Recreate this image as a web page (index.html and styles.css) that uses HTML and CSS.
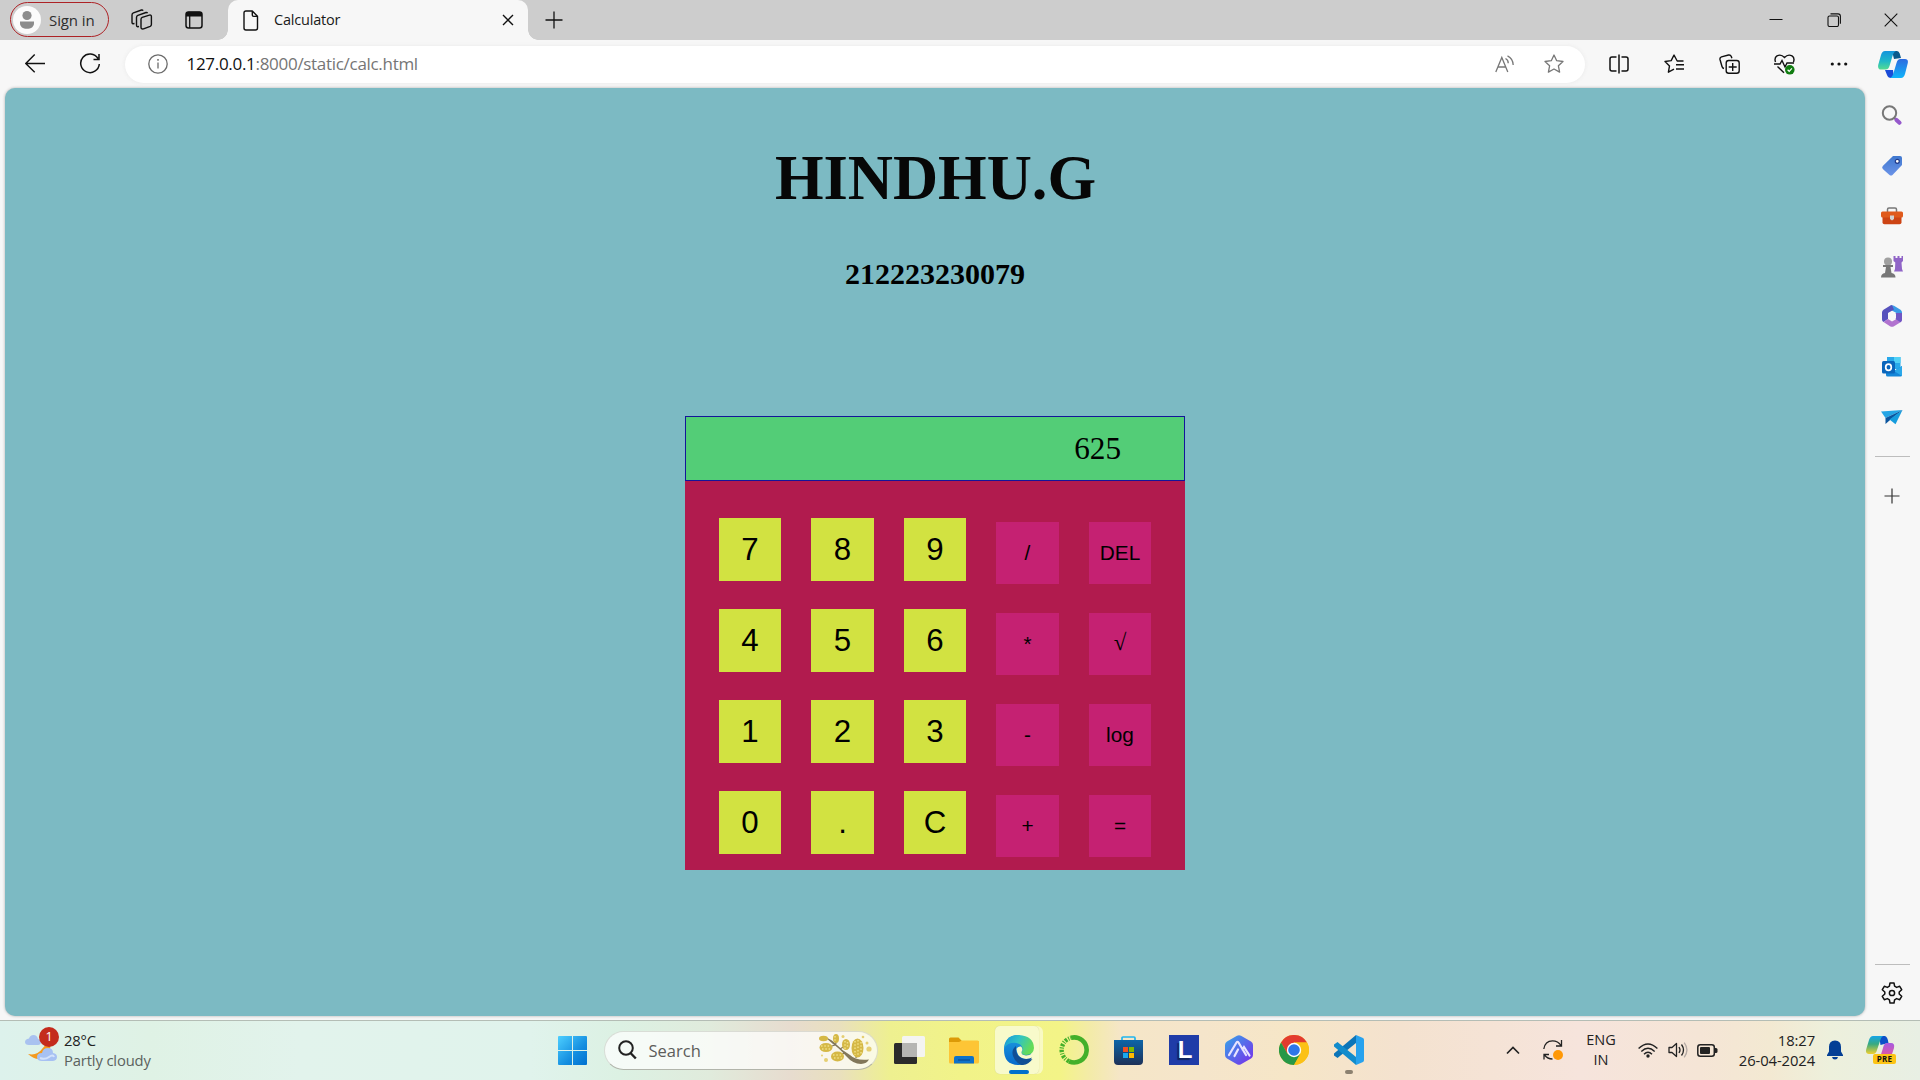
FILE: index.html
```html
<!DOCTYPE html>
<html lang="en">
<head>
<meta charset="utf-8">
<title>Calculator</title>
<link rel="stylesheet" href="styles.css">
</head>
<body>
<div class="desktop">
  <header class="tabstrip">
    <div class="signin">
      <svg width="28" height="28" viewBox="0 0 28 28"><circle cx="14" cy="14" r="14" fill="#fbfbfb"/><circle cx="14" cy="9.5" r="4.6" fill="#8c8c8c"/><path d="M7 15.500h14v1.500c0 4-3 5.800-7 5.800s-7-1.800-7-5.800z" fill="#8c8c8c"/></svg>
      <span class="ui signin-label">Sign in</span>
    </div>
    <svg class="workspaces" width="22" height="22" viewBox="0 0 22 22" fill="none" stroke="#111" stroke-width="1.400" stroke-linejoin="round"><path d="M10 10.200q0-1.300 1.200-1.800l7.200-2.300q2-.4 2 1.400v8q0 1.300-1.200 1.800l-6.700 2.600q-2.500.5-2.500-1.700z"/><path d="M8 17.500l-1.500.2q-1 0-1-1.400V8.500q0-1.600 1.400-2.200L15 3.500q1.200-.2 1.500.8"/><path d="M3.500 14.500l-1.500.2q-1 0-1-1.400V6q0-1.600 1.400-2.200L10.500 1q1.200-.2 1.500.8"/></svg>
    <svg class="tabactions" width="18" height="18" viewBox="0 0 18 18"><rect x="1" y="1" width="16" height="16" rx="2.500" fill="none" stroke="#111" stroke-width="1.500"/><path d="M1 3q0-2.300 2.300-2.300h11.400q2.300 0 2.300 2.300v2.500H1z" fill="#111"/><path d="M4.700 5v12" stroke="#111" stroke-width="1.300"/></svg>
    <div class="tab">
      <svg width="16" height="21" viewBox="0 0 16 21" fill="none" stroke="#111" stroke-width="1.400" stroke-linejoin="round"><path d="M9.300 1H3Q1 1 1 3v15q0 2 2 2h9.500q2 0 2-2V6.300zV5q0 1.400 1.400 1.400h3.800"/></svg>
      <span class="ui tab-title">Calculator</span>
      <svg width="12" height="12" viewBox="0 0 12 12" stroke="#111" stroke-width="1.400"><path d="M1 1l10 10M11 1L1 11"/></svg>
    </div>
    <svg class="newtab" width="18" height="18" viewBox="0 0 18 18" stroke="#111" stroke-width="1.300"><path d="M9 .5v17M.5 9h17"/></svg>
    <div class="winctl">
      <svg width="14" height="14" viewBox="0 0 14 14" stroke="#111"><path d="M.5 6.500h13"/></svg>
      <svg width="14" height="14" viewBox="0 0 14 14" fill="none" stroke="#111" stroke-width="1.100"><rect x="1" y="3" width="10.500" height="10.500" rx="1.500"/><path d="M3.500.9H11q2.400 0 2.400 2.400v7.500"/></svg>
      <svg width="14" height="14" viewBox="0 0 14 14" stroke="#111" stroke-width="1.100"><path d="M.7.7l12.600 12.600M13.300.7L.7 13.300"/></svg>
    </div>
  </header>

  <nav class="toolbar">
    <div class="navbtn"><svg width="20" height="20" viewBox="0 0 20 20" fill="none" stroke="#111" stroke-width="1.400"><path d="M20 9.500H.8M9.700.5L.8 9.500l8.900 8.800"/></svg></div>
    <div class="navbtn"><svg width="22" height="22" viewBox="0 0 22 22" fill="none" stroke="#111" stroke-width="1.500"><path d="M19 5.500A9.300 9.300 0 1 0 20.300 11M20 1v5.500h-5.500"/></svg></div>
    <div class="address">
      <svg width="20" height="20" viewBox="0 0 20 20" fill="none" stroke="#6b6b6b" stroke-width="1.300"><circle cx="10" cy="10" r="9.200"/><path d="M10 8.500v6"/><path d="M10 5v1.700" stroke-width="1.500"/></svg>
      <span class="ui url"><b class="host">127.0.0.1</b>:8000/static/calc.html</span>
      <div class="addr-btn"><svg width="20" height="18" viewBox="0 0 20 18" fill="none" stroke="#777" stroke-width="1.300"><path d="M.8 17L6.800 2.500 12.800 17M3 12h7.600M10.500 3.500q3 1.500 2.700 4.800M12.500.8q5.500 2.700 5.700 9.200"/></svg></div>
      <div class="addr-btn"><svg width="20" height="20" viewBox="0 0 20 20" fill="none" stroke="#777" stroke-width="1.300" stroke-linejoin="round"><path d="M10 1l2.700 5.700 6.300.8-4.600 4.300 1.200 6.300L10 15l-5.600 3.100 1.200-6.300L1 7.500l6.300-.8z"/></svg></div>
    </div>
    <div class="tools">
      <div class="tool"><svg width="20" height="20" viewBox="0 0 20 20" fill="none" stroke="#111" stroke-width="1.500"><path d="M7.500 3H3Q1 3 1 5v10q0 2 2 2h4.500M12.500 3H17q2 0 2 2v10q0 2-2 2h-4.500M10 .5v19"/></svg></div>
      <div class="tool"><svg width="20" height="20" viewBox="0 0 20 20" fill="none" stroke="#111" stroke-width="1.400" stroke-linejoin="round"><path d="M19.500 7h-6.300L10 1 7.200 6.600 1 7.500l4.500 4.400-1.100 6.300 5.600-3M12 10.800h8M12 15h8"/></svg></div>
      <div class="tool"><svg width="21" height="20" viewBox="0 0 21 20" fill="none" stroke="#111" stroke-width="1.400"><rect x="7.200" y="6.500" width="13" height="12.800" rx="2.500"/><path d="M13.700 9v8M9.700 13h8M5 14.500q-1.500-.3-2-2L1 5.500Q.6 3.500 2.500 2.800L9.500 1Q11.500.6 12.300 2.500l.6 1.700"/></svg></div>
      <div class="tool"><svg width="21" height="21" viewBox="0 0 21 21" fill="none" stroke="#111" stroke-width="1.400"><path d="M1.500 8Q0 4 3 1.900 7-.3 10.500 3.500 14-.3 18 1.900 21 4 19.500 8M0 10h6l2-3.500 3 6.500 2-4h7M3.500 12.500l6.500 6.300"/><circle cx="15.800" cy="15.800" r="4.800" fill="#107c10" stroke="none"/><path d="M13.600 15.800l1.600 1.500 2.700-2.900" stroke="#fff" stroke-width="1.200"/></svg></div>
      <div class="tool"><svg width="18" height="4" viewBox="0 0 18 4" fill="#111"><circle cx="2.300" cy="2" r="1.600"/><circle cx="9" cy="2" r="1.600"/><circle cx="15.700" cy="2" r="1.600"/></svg></div>
      <div class="tool"><svg width="30" height="27" viewBox="0 0 30 27"><defs><linearGradient id="ca" x1="0" y1="0" x2="0" y2="1"><stop offset="0" stop-color="#1494dc"/><stop offset=".55" stop-color="#20b8c8"/><stop offset="1" stop-color="#55dc90"/></linearGradient><linearGradient id="cb" x1="0" y1="0" x2="0" y2="1"><stop offset="0" stop-color="#2d6be0"/><stop offset="1" stop-color="#10b4fa"/></linearGradient></defs><path d="M14 0h5q2 0 2.700 2.500L23 7l-7 1z" fill="#0a5a8c"/><path d="M7 19h8l1 8h-3q-3 0-4-3z" fill="#1a4bd8"/><path d="M7 0h11q-2.500 1-3.500 5l-3 10q-1 3.500-4 3.500H3Q-.5 18.500.2 14L3 4Q4.200 0 7 0z" fill="url(#ca)"/><path d="M23 27H12q2.500-1 3.500-5l3-10q1-4 4-4H27q3.500 0 2.800 4L27 23q-1.200 4-4 4z" fill="url(#cb)"/></svg></div>
    </div>
  </nav>

  <div class="body-row">
    <main class="page">
      <h1 class="name">HINDHU.G</h1>
      <h2 class="regno">212223230079</h2>
      <div class="calc">
        <div class="display">625</div>
        <div class="keys">
          <button class="key num">7</button><button class="key num">8</button><button class="key num">9</button><button class="key op">/</button><button class="key op">DEL</button>
          <button class="key num">4</button><button class="key num">5</button><button class="key num">6</button><button class="key op">*</button><button class="key op root">√</button>
          <button class="key num">1</button><button class="key num">2</button><button class="key num">3</button><button class="key op">-</button><button class="key op">log</button>
          <button class="key num">0</button><button class="key num">.</button><button class="key num">C</button><button class="key op">+</button><button class="key op">=</button>
        </div>
      </div>
    </main>
    <aside class="sidebar">
      <div class="side"><svg width="22" height="22" viewBox="0 0 22 22" fill="none"><circle cx="8.500" cy="8" r="6.700" stroke="#777" stroke-width="2"/><path d="M13 12.500l2 2" stroke="#777" stroke-width="2"/><path d="M15.500 15l3 2.700" stroke="#9659cc" stroke-width="4.200" stroke-linecap="round"/></svg></div>
      <div class="side"><svg width="22" height="22" viewBox="0 0 22 22"><defs><linearGradient id="tg" x1="0" y1="0" x2="0" y2="1"><stop offset="0" stop-color="#3f78cf"/><stop offset="1" stop-color="#6b93e8"/></linearGradient></defs><path d="M12 1h7q2 0 2 2v7L11.500 20q-1.500 1.200-3 0L1.800 14q-1.300-1.500 0-3z" fill="url(#tg)"/><circle cx="16.300" cy="6.300" r="2" fill="#fff" stroke="#213b8a" stroke-width="1.200"/></svg></div>
      <div class="side"><svg width="22" height="18" viewBox="0 0 22 18"><path d="M6.500 5V2.500Q6.500 1 8 1h6q1.500 0 1.500 1.500V5" fill="none" stroke="#777" stroke-width="1.500"/><path d="M1.500 8h19v7.500q0 1.800-2 1.800h-15q-2 0-2-1.800z" fill="#cd4414"/><rect y="4.500" width="22" height="6" rx="1.500" fill="#e05a1c"/><path d="M9 8.500h4V12l-2 1.500L9 12z" fill="#d2d2d2"/></svg></div>
      <div class="side"><svg width="22" height="23" viewBox="0 0 22 23"><path d="M12.500 1h2v2h2V1h2v2h2V1H22v5l-1.500 1.500L21 14l1 2.500h-9L14 14l.3-6.500L12.500 6z" fill="#9065c7"/><circle cx="7" cy="6.500" r="4" fill="#a0a0a0"/><path d="M2 10h10v2H9.500l1 6q4 .5 4 4.500H0q0-4 4-4.500l1-6H2z" fill="#777"/></svg></div>
      <div class="side"><svg width="20" height="22" viewBox="0 0 20 22"><path d="M8 .8q2-1.200 4 0l6.500 4Q20 5.800 20 7.500V14l-5.500-2.500V8L8 4.500z" fill="#3a9be6"/><path d="M8 .8L1.500 4.800Q0 5.800 0 7.500v7Q0 16 1.500 17L6 14V8l6-3.500-2-4.500z" fill="#5651bd"/><path d="M1.500 17L8 21.200q2 1.200 4 0l6.500-4Q20 16.200 20 14.500V12l-5.500-1v3L10 16.500 6 14z" fill="#b173cf"/><path d="M20 8v7q-.3 1.300-1.500 2.200L13.500 14V8z" fill="#6f56c4"/><path d="M10 6.500l4 2.300v4.500l-4 2.300-4-2.300V8.800z" fill="#f7f7f7"/></svg></div>
      <div class="side"><svg width="20" height="20" viewBox="0 0 20 20"><path d="M5 0h13.500v12H5z" fill="#28a8ea"/><path d="M12 0h6.500v6H12z" fill="#50d0f5"/><path d="M4 9l8 5 8-5v9q0 1.500-1.500 1.500h-13Q4 19.500 4 18z" fill="#1486d8"/><path d="M20 9v10l-8-5z" fill="#2aa8ea"/><rect y="4" width="13" height="12.500" rx="1.500" fill="#0a66bc"/><ellipse cx="6.500" cy="10.200" rx="2.800" ry="3.100" fill="none" stroke="#fff" stroke-width="1.700"/></svg></div>
      <div class="side"><svg width="22" height="16" viewBox="0 0 22 16"><path d="M0 2.500L21.500 1 4.500 9z" fill="#25a5e5"/><path d="M21.500 1L4.500 9v6l4-3.500z" fill="#0b559e"/><path d="M21.500 1L8.500 10.500l6 4.700z" fill="#169cdd"/></svg></div>
      <hr class="rule">
      <svg class="side-add" width="16" height="16" viewBox="0 0 16 16" stroke="#333" stroke-width="1.200"><path d="M8 .5v15M.5 8h15"/></svg>
      <hr class="rule lower">
      <svg class="gear" width="22" height="22" viewBox="0 0 22 22" fill="none" stroke="#111" stroke-width="1.500" stroke-linejoin="round"><path d="M9 1h4l.6 3.200 2 1.200 3.100-1.100 2 3.400L18.200 10v2l2.500 2.300-2 3.400-3.100-1.100-2 1.200L13 21H9l-.6-3.200-2-1.200-3.100 1.100-2-3.400L3.800 12v-2L1.300 7.700l2-3.400 3.100 1.100 2-1.200z"/><circle cx="11" cy="11" r="2.600"/></svg>
    </aside>
  </div>

  <footer class="taskbar">
    <div class="weather">
      <div class="weather-icon">
        <svg width="32" height="30" viewBox="0 0 32 30"><path d="M24 6q4 10-3 17-8 7-18-2 9 2 14-5 4-4 7-10z" fill="#f49a1f"/><path d="M4 12q-4 0-4-3t4-3.500Q5 2 8.500 2T13 6q3 .5 3 3t-3 3z" fill="#a9c2f0"/><path d="M17 28q-5 0-5-4t5-4q1-5 6-5t5 5q4 .5 4 4t-4 4z" fill="#a7c1f3"/><path d="M15 25q5 2 9-1t5 0" stroke="#d3e2fb" stroke-width="2" fill="none"/></svg>
        <span class="ui badge">1</span>
      </div>
      <div class="ui weather-text"><span class="temp">28°C</span><span class="cond">Partly cloudy</span></div>
    </div>
    <div class="apps">
      <div class="app"><svg width="29" height="29" viewBox="0 0 29 29"><defs><linearGradient id="win" x1="0" y1="0" x2="1" y2="1"><stop offset="0" stop-color="#4dcfff"/><stop offset=".6" stop-color="#148ee0"/><stop offset="1" stop-color="#0070d0"/></linearGradient></defs><path d="M1 0h13v14H0V1q0-1 1-1zM15 0h13q1 0 1 1v13H15zM0 15h14v14H1q-1 0-1-1zM15 15h14v13q0 1-1 1H15z" fill="url(#win)"/></svg></div>
      <div class="search">
        <svg width="19" height="20" viewBox="0 0 19 20" fill="none" stroke="#222" stroke-width="2"><circle cx="8" cy="8" r="6.800"/><path d="M12.500 13l5.300 5.500" stroke-width="2.400"/></svg>
        <span class="ui search-label">Search</span>
        <svg width="53" height="32" viewBox="0 0 53 32"><path d="M6 3q7 2.500 12 8t13 10q6 6 19 4.500-2 4-8 4.500-8 0-15-8T14 10Q10 6.500 6 3z" fill="#82775a"/><path d="M17 10l-1-4M21 15l5-3M37 24l1-7M20 21l6-2M10 13l6-2" stroke="#82775a" stroke-width="1.300"/><g fill="#d5b846"><ellipse cx="4.500" cy="4.500" rx="4.500" ry="2.800"/><ellipse cx="17" cy="4.500" rx="3" ry="4.500"/><ellipse cx="7" cy="13.500" rx="6.500" ry="4.500"/><ellipse cx="27" cy="10.500" rx="4" ry="5.500"/><ellipse cx="38.500" cy="14" rx="6" ry="9.500"/><ellipse cx="18.500" cy="22.500" rx="6.500" ry="5"/></g><g fill="none" stroke="#f0df86" stroke-width="1.500" stroke-dasharray="1.500 1.800"><path d="M36 7v14M39 6v16M42 8v12M2 12h10M3 15h9M14 21h10M15 24h9M26 7v8M28.500 8v6M16 2v5"/></g><g fill="#e5cf72"><circle cx="50" cy="15" r="2.600"/><circle cx="48" cy="9" r="1.500"/><circle cx="44" cy="3" r="1.300"/><circle cx="24" cy="2.500" r="1.500"/><circle cx="7" cy="26" r="2"/><circle cx="3" cy="21.500" r="1"/></g></svg>
      </div>
      <div class="app taskview"><svg width="31" height="28" viewBox="0 0 31 28"><rect y="7" width="23" height="21" rx="1.500" fill="#2b2b2b"/><rect x="8" y="0" width="23" height="21" rx="1.500" fill="#f4f4f2"/><path d="M8 7h15v14H9.500Q8 21 8 19.500z" fill="#b5b5b3"/></svg></div>
      <div class="app"><svg width="30" height="27" viewBox="0 0 30 27"><path d="M0 5V2Q0 .5 1.500.5h8L13 4h15.500Q30 4 30 5.500V10H0z" fill="#dc9a07"/><path d="M0 5h10l3-1.500h15.500Q30 3.500 30 5v20q0 1.500-1.500 1.500h-27Q0 26.500 0 25z" fill="#fdc535"/><path d="M5 26.500V21q0-2 2-2h16q2 0 2 2v5.500z" fill="#0f72c8"/><path d="M9 23h12" stroke="#0a4c94" stroke-width="1.200"/></svg></div>
      <div class="app edge"><div class="edge-stack"><div class="edge-tile"><svg width="30" height="30" viewBox="0 0 30 30"><defs><linearGradient id="ed" x1="0" y1="0" x2="1" y2=".4"><stop offset="0" stop-color="#1597d8"/><stop offset=".5" stop-color="#30c3c5"/><stop offset="1" stop-color="#64dc57"/></linearGradient><linearGradient id="eb" x1="0" y1="0" x2="0" y2="1"><stop offset="0" stop-color="#1e9de0"/><stop offset="1" stop-color="#0869cb"/></linearGradient></defs><path d="M15 0Q0 0 0 15t15 15q8 0 13-8l-2-8z" fill="url(#eb)"/><path d="M.2 13Q2 0 15 0q14.500 1 15 13-.5 7-8 7-5 0-4.500-3 1.500-1.500 1-4-1-4-6-5Q4 7 .2 13z" fill="url(#ed)"/><path d="M12 11q-5 4-3 10t8 9q7 .5 11.500-6-6 2.500-11-.5t-5.500-9z" fill="#114f95"/><path d="M12.500 14q1-3 4.500-2.500 2.500 2.500.5 5.500-.5 3 4.500 3.500 3 0 7-2.500v4.500q-6 2.500-11 .5t-5.500-9z" fill="#f8facb"/><path d="M13.500 19q2 5 8.500 5 4 0 6-1.500l-3 4.500q-8 1-11.500-8z" fill="#114f95"/></svg></div></div></div>
      <div class="app"><svg width="30" height="30" viewBox="0 0 30 30" fill="none"><path d="M12 2.800A12.500 12.500 0 1 1 10 26.300" stroke="#43b02a" stroke-width="4.600"/><path d="M10 26.300A12.500 12.500 0 0 1 12 2.800" stroke="#43b02a" stroke-width="4.400" stroke-dasharray="2.500 1.300 1 1.200"/></svg></div>
      <div class="app store"><svg width="29" height="29" viewBox="0 0 29 29"><defs><linearGradient id="st" x1="0" y1="0" x2="0" y2="1"><stop offset="0" stop-color="#0d65a8"/><stop offset="1" stop-color="#1d3158"/></linearGradient></defs><path d="M8 5V2q0-1 1-1h11q1 0 1 1v3" fill="none" stroke="#20b5ee" stroke-width="1.700"/><path d="M0 4h29v21q0 4-4 4H4q-4 0-4-4z" fill="url(#st)"/><path d="M9 11h5v5H9z" fill="#f25022"/><path d="M15 11h5v5h-5z" fill="#7fba00"/><path d="M9 17h5v5H9z" fill="#1ba8ee"/><path d="M15 17h5v5h-5z" fill="#ffb900"/></svg></div>
      <div class="app"><div class="ltile"><span>L</span></div></div>
      <div class="app"><svg width="28" height="30" viewBox="0 0 28 30"><defs><linearGradient id="am" x1="0" y1="0" x2="1" y2="1"><stop offset="0" stop-color="#35a8e8"/><stop offset=".5" stop-color="#5868ea"/><stop offset="1" stop-color="#7a2bea"/></linearGradient></defs><path d="M12 .8q2-1.200 4 0l10 5.700q2 1.300 2 3.500v10q0 2.200-2 3.500l-10 5.700q-2 1.200-4 0L2 23.500Q0 22.200 0 20V10q0-2.200 2-3.500z" fill="url(#am)"/><path d="M4 20L11.500 7.500q1-1.500 2 0L21 20M9.500 21l3.500-6.500M17.500 14.500l1.500-2.500 5.500 8.500" fill="none" stroke="#e8e4ff" stroke-width="2.200" stroke-linecap="round"/></svg></div>
      <div class="app"><svg width="30" height="30" viewBox="0 0 30 30"><circle cx="15" cy="15" r="15" fill="#fbc116"/><path d="M2 7.500A15 15 0 0 1 28 7.500H15L8.500 18.800z" fill="#e33b2e"/><path d="M2 7.500A15 15 0 0 0 15 30l6.500-11.200h-13z" fill="#279847"/><path d="M28 7.500H15v7.500l6.500 3.800L15 30A15 15 0 0 0 28 7.500z" fill="#fbc116"/><circle cx="15" cy="15" r="7.200" fill="#fff"/><circle cx="15" cy="15" r="5.800" fill="#2e76e8"/></svg></div>
      <div class="app vscode"><svg width="30" height="30" viewBox="0 0 30 30"><path d="M22 0v8L3.500 23 0 20.500v-2z" fill="#0c75b8"/><path d="M22 30v-8L3.500 7 0 9.500v2z" fill="#128ccc"/><path d="M22 0l7 3q1 .5 1 2v20q0 1.500-1 2l-7 3z" fill="#27a2ee"/></svg></div>
    </div>
    <div class="tray">
      <div class="tray-btn"><svg width="14" height="9" viewBox="0 0 14 9" fill="none" stroke="#222" stroke-width="1.700"><path d="M1 7.500l6-6 6 6"/></svg></div>
      <div class="tray-btn"><svg width="20" height="20" viewBox="0 0 20 20" fill="none" stroke="#222" stroke-width="1.300"><path d="M.8 9Q2 .8 9.500.8 15 .8 18 5.500M18.500 0v6H13M1 19.500v-5h5M1.500 15q3 4 8 4"/><circle cx="15" cy="15" r="5" fill="#ff9806" stroke="none"/></svg></div>
      <div class="ui lang"><span>ENG</span><span>IN</span></div>
      <div class="status"><svg width="20" height="15" viewBox="0 0 20 15" fill="none" stroke="#222" stroke-width="1.400"><path d="M.6 5.500q9.400-9.200 18.800 0M3.300 8.500q6.700-6.500 13.400 0M6 11.300q4-4 8 0"/><circle cx="10" cy="13" r="1.700" fill="#222" stroke="none"/></svg>
      <svg width="20" height="16" viewBox="0 0 20 16" fill="none" stroke="#222" stroke-width="1.300" stroke-linejoin="round"><path d="M1 5.500h3L8.500 1.500v13L4 10.500H1zM11 5q2 3 0 6M13.500 2.500q4 5.500 0 11"/><path d="M16.200.7q5.500 7.300 0 14.600" stroke="#b5aaa4"/></svg>
      <svg width="21" height="13" viewBox="0 0 21 13"><rect x=".8" y=".8" width="16.500" height="11.400" rx="2.500" fill="none" stroke="#222" stroke-width="1.500"/><rect x="3" y="3" width="10" height="7" rx="1" fill="#222"/><path d="M18 4h1q1.500 0 1.500 1.500v2Q20.500 9 19 9h-1z" fill="#222"/></svg></div>
      <div class="ui clock"><span>18:27</span><span class="date">26-04-2024</span></div>
      <svg class="bell" width="16" height="20" viewBox="0 0 16 20" fill="#043f95"><path d="M8 .5q6 .4 6 6.500v4.500l2 3.500v1H0v-1l2-3.500V7Q2 .9 8 .5zM5 17h6q-.5 2.500-3 2.500T5 17z"/></svg>
      <div class="pre-icon"><svg width="29" height="26" viewBox="0 0 29 26"><defs><linearGradient id="pa" x1="0" y1="0" x2="0" y2="1"><stop offset="0" stop-color="#14a5e8"/><stop offset=".45" stop-color="#38aa80"/><stop offset="1" stop-color="#f0d030"/></linearGradient><linearGradient id="pb" x1="0" y1="0" x2="0" y2="1"><stop offset="0" stop-color="#a75be0"/><stop offset="1" stop-color="#f8558c"/></linearGradient></defs><path d="M13 0h6q2.500.5 3.500 7l-8 2z" fill="#0c50c8"/><path d="M7 0h10q-2 1-3 5l-3 9q-1 4-4 4H3q-4 0-2.700-5L3 4Q4.300 0 7 0z" fill="url(#pa)"/><path d="M21 25H11q2.500-1 3.500-5l2.500-8q1-5 4-5h4q4 0 3 5l-3 9q-1.200 4-4 4z" fill="url(#pb)"/></svg><span class="ui pre">PRE</span></div>
    </div>
  </footer>
</div>
</body>
</html>
```

FILE: styles.css
```css
* { box-sizing: border-box; }
body { margin: 0; overflow: hidden; }
svg { display: block; flex: none; }
.ui { font-family: "Open Sans", "Noto Sans", sans-serif; white-space: nowrap; }

.desktop { width: 1920px; height: 1080px; display: flex; flex-direction: column; background: #f7f7f7; }

/* Tab strip */
.tabstrip { height: 40px; display: flex; align-items: center; background: #cdcdcd; padding-left: 10px; flex: none; }
.signin { width: 99px; height: 35px; border: 1.5px solid #ad2226; border-radius: 18px; display: flex; align-items: center; padding-left: 2px; margin-bottom: 1px; }
.signin-label { font-size: 15px; margin-left: 8px; color: #2e2e2e; letter-spacing: -0.1px; }
.workspaces { margin-left: 22px; }
.tabactions { margin-left: 32px; }
.tab { width: 300px; height: 40px; margin-left: 25px; padding: 0 14px 0 15px; background: #f7f7f7; border-radius: 10px 10px 0 0; display: flex; align-items: center; position: relative; }
.tab::before, .tab::after { content: ""; position: absolute; bottom: 0; width: 10px; height: 10px; }
.tab::before { left: -10px; background: radial-gradient(circle at 0 0, transparent 9.5px, #f7f7f7 10px); }
.tab::after { right: -10px; background: radial-gradient(circle at 100% 0, transparent 9.5px, #f7f7f7 10px); }
.tab-title { flex: 1; margin-left: 15px; padding-bottom: 2px; font-size: 14.5px; letter-spacing: -0.2px; color: #1a1a1a; }
.newtab { margin-left: 17px; }
.winctl { display: flex; gap: 43.5px; margin-left: auto; padding-right: 22px; }

/* Toolbar */
.toolbar { height: 48px; display: flex; align-items: center; padding-left: 7.5px; flex: none; }
.navbtn { width: 55px; display: flex; justify-content: center; }
.address { width: 1460px; height: 37px; margin-left: 7.5px; padding: 0 6.5px 0 22.5px; border-radius: 19px; background: #fff; box-shadow: 0 0 4px #e9e9e9; display: flex; align-items: center; }
.url { flex: 1; margin-left: 19px; padding-bottom: 2px; font-size: 17px; letter-spacing: -0.3px; color: #757575; }
.host { font-weight: 400; color: #111; }
.addr-btn { width: 49px; display: flex; justify-content: center; }
.tools { display: flex; align-items: center; margin-left: 6.5px; }
.tool { width: 55px; height: 28px; display: flex; align-items: center; justify-content: center; }
.tool:last-child { width: 52px; }

/* Page */
.body-row { flex: 1; display: flex; padding: 0 0 4px 5px; min-height: 0; }
.page { width: 1860px; height: 928px; background: #7cbac3; border-radius: 10px; box-shadow: 0 0 3px #aaa; display: flex; flex-direction: column; align-items: center; font-family: "Liberation Serif", "Times New Roman", serif; }
.name { margin: 54px 0 0 1px; font-size: 62.5px; line-height: 72px; color: #070707; }
.regno { margin: 42px 0 0; font-size: 30px; line-height: 36px; color: #000; }
.calc { width: 500px; height: 454px; margin-top: 124px; background: #b11b4e; }
.display { height: 65px; padding-right: 63px; border: 1px solid #14149a; background: #53cd77; font-size: 31.25px; line-height: 64px; text-align: right; color: #000; }
.keys { display: grid; grid-template-columns: repeat(5, 62.5px); grid-auto-rows: 63px; gap: 28px 30px; padding: 37px 0 0 33.75px; }
.key { border: 0; padding: 0; font-family: "Liberation Sans", Arial, sans-serif; color: #000; }
.num { height: 63px; background: #d2e241; font-size: 31.25px; }
.op { height: 62px; margin-top: 4px; background: #c52172; font-size: 20.8px; }
.root { padding-bottom: 3px; font-family: "Liberation Serif", serif; font-size: 23px; }

/* Sidebar */
.sidebar { width: 55px; display: flex; flex-direction: column; align-items: center; padding-top: 3px; padding-right: 1px; }
.side { height: 50.1px; width: 54px; display: flex; align-items: center; justify-content: center; flex: none; }
.rule { width: 35px; height: 1px; margin: 14.5px 0 0; border: 0; background: #bdbdbd; flex: none; }
.side-add { margin-top: 31px; }
.rule.lower { margin-top: 460px; }
.gear { margin-top: 17px; }

/* Taskbar */
.taskbar { height: 60px; flex: none; display: flex; border-top: 1px solid #b4bdb5; background: linear-gradient(90deg, #ddf2ec 0, #dff2e5 150px, #e2f3ec 300px, #e0f3ec 530px, #dcf1e3 620px, #e0ebdc 710px, #e7dccf 790px, #e9e0bd 840px, #eef090 890px, #f1f389 960px, #f3f487 1060px, #f3eba8 1090px, #f5e6c7 1120px, #f5e5cb 1200px, #f6e6c7 1290px, #f4e2cf 1400px, #f6e4dc 1580px, #f5e5d6 1700px, #f3e9d2 1770px, #edf0dc 1830px, #e8efe4 1920px); }
.weather { width: 519.5px; margin-left: 25px; display: flex; align-items: flex-start; padding-top: 8px; }
.weather-icon { position: relative; width: 39px; padding-top: 4px; }
.badge { position: absolute; left: 14px; top: -2px; width: 20px; height: 20px; border-radius: 50%; background: #c42b1c; color: #fff; font-size: 12.5px; line-height: 20px; text-align: center; }
.weather-text { display: flex; flex-direction: column; margin-top: 0.5px; font-size: 14.8px; line-height: 20px; letter-spacing: -0.15px; }
.temp { color: #222; }
.cond { color: #5b625e; }
.apps { display: flex; align-items: center; height: 58px; }
.app { width: 55px; height: 58px; display: flex; align-items: center; justify-content: center; position: relative; }
.taskview { margin-left: 4px; }
.search { width: 274px; height: 39px; margin-left: 4px; padding: 0 5px 0 13px; border-radius: 20px; background: rgba(255, 255, 255, 0.72); border: 1px solid rgba(150, 155, 140, 0.3); border-bottom-color: rgba(120, 125, 110, 0.55); display: flex; align-items: center; }
.search-label { flex: 1; margin-left: 12px; font-size: 16.5px; color: #5d5d5b; }
.app.edge { justify-content: flex-start; padding-left: 3px; }
.edge-stack { width: 48px; height: 48px; padding-right: 4px; border-radius: 6px; background: rgba(255, 255, 255, 0.5); }
.edge-tile { width: 44px; height: 48px; border-radius: 5px; background: #f8facb; box-shadow: 0 0 1px #c9cb90; display: flex; align-items: center; justify-content: center; position: relative; padding-left: 4px; }
.edge-tile::after { content: ""; position: absolute; left: 14px; bottom: 0; width: 20px; height: 4px; border-radius: 2px; background: #0070cc; }
.store { padding-right: 2px; }
.vscode::after { content: ""; position: absolute; left: 23.5px; bottom: 5px; width: 8px; height: 4px; border-radius: 2px; background: #8c8170; }
.ltile { width: 30px; height: 30px; background: #1f3ca8; color: #fff; font: 700 24px/29px "Liberation Sans", Arial, sans-serif; text-align: center; padding-left: 2px; text-shadow: -2px 2px 1px #10245e; }
.tray { display: flex; align-items: center; height: 58px; margin-left: auto; width: 427px; color: #222; font-size: 14.5px; line-height: 20px; }
.tray-btn { width: 40px; display: flex; justify-content: center; }
.lang { width: 56px; display: flex; flex-direction: column; align-items: center; font-size: 14.5px; }
.status { width: 80px; margin-left: 9px; display: flex; align-items: center; justify-content: space-between; }
.clock { width: 97px; display: flex; flex-direction: column; align-items: flex-end; font-size: 14.8px; letter-spacing: -0.1px; }
.bell { margin-left: 12px; }
.pre-icon { margin-left: 23px; width: 29px; height: 28px; position: relative; }
.pre { position: absolute; left: 7px; bottom: 0; width: 23px; height: 10px; border-radius: 2px; background: #fcc414; color: #111; font-size: 8px; font-weight: 700; line-height: 10px; text-align: center; letter-spacing: 0.3px; }
```
